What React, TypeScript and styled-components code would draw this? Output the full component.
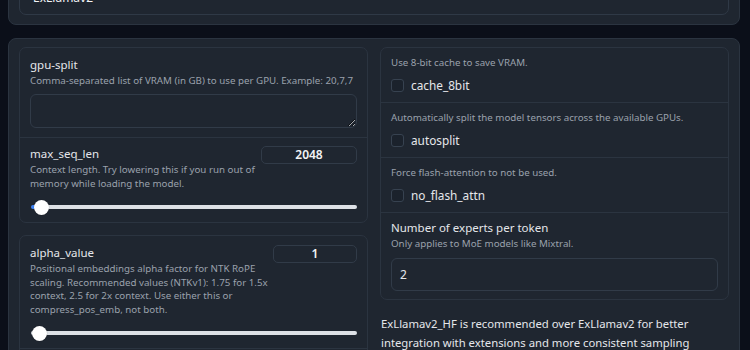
import React from 'react';
import styled, { createGlobalStyle } from 'styled-components';

const GlobalStyle = createGlobalStyle`
  html, body {
    margin: 0;
    padding: 0;
    background: #0b0f19;
  }
  body {
    font-family: "Noto Sans", "Open Sans", sans-serif;
    color: #e5e7eb;
    overflow: hidden;
    color-scheme: dark;
  }
`;

const Page = styled.div`
  width: 750px;
  height: 350px;
  overflow: hidden;
  padding: 0 10px 0 8px;
  box-sizing: border-box;
`;

const Stack = styled.div`
  margin-top: -31px;
  display: flex;
  flex-direction: column;
  gap: 13px;
`;

const Panel = styled.div`
  background: #1f2630;
  border: 1px solid #2b3440;
  border-radius: 8px;
  padding: 9px 10px;
`;

const MainPanel = styled(Panel)`
  padding: 8px 10px;
  display: grid;
  grid-template-columns: 1fr 1fr;
  gap: 12px;
  align-items: start;
`;

const Dropdown = styled.div`
  height: 36px;
  box-sizing: border-box;
  border: 1px solid #2f3946;
  border-radius: 7px;
  background: #1f2630;
  display: flex;
  align-items: center;
  justify-content: space-between;
  padding: 0 21px 0 13px;
  font-size: 12px;
  color: #f3f4f6;
`;

const Caret = styled.span`
  width: 0;
  height: 0;
  border-left: 4px solid transparent;
  border-right: 4px solid transparent;
  border-top: 5px solid #f3f4f6;
`;

const Column = styled.div`
  display: flex;
  flex-direction: column;
  gap: 12px;
`;

const Box = styled.div`
  border: 1px solid #2b3440;
  border-radius: 7px;
  background: #1f2630;
`;

const Section = styled.div<{ $pad?: string }>`
  padding: ${p => p.$pad || '8px 10px'};
  min-height: 18px;
  & + & {
    border-top: 1px solid #2b3440;
  }
`;

const Label = styled.div`
  font-size: 11.5px;
  line-height: 18px;
  color: #e5e7eb;
`;

const Info = styled.div<{ $lh?: number }>`
  font-size: 9.75px;
  line-height: ${p => p.$lh || 14}px;
  color: #9aa1ac;
`;

const TextArea = styled.textarea`
  display: block;
  width: 100%;
  height: 34px;
  margin-top: 6px;
  box-sizing: border-box;
  background: #1f2630;
  border: 1px solid #313b48;
  border-radius: 6px;
  resize: vertical;
  color: #e5e7eb;
  outline: none;
`;

const Row = styled.div<{ $gap?: number }>`
  display: flex;
  align-items: flex-start;
  gap: ${p => p.$gap ?? 6}px;
`;

const Grow = styled.div`
  flex: 1;
`;

const NumberBox = styled.div<{ $w: number }>`
  width: ${p => p.$w}px;
  height: 18px;
  margin-top: 1px;
  box-sizing: border-box;
  border: 1px solid #313b48;
  border-radius: 5px;
  font-size: 12px;
  font-weight: 600;
  line-height: 16px;
  text-align: center;
  color: #f3f4f6;
`;

const SliderTrack = styled.div`
  position: relative;
  margin: 10px 0 0 1px;
  height: 14px;
  display: flex;
  align-items: center;
`;

const Rail = styled.div<{ $fill: number }>`
  height: 4px;
  width: 100%;
  border-radius: 2px;
  background: linear-gradient(to right, #3b82f6 ${p => p.$fill}px, #dde1e6 ${p => p.$fill}px);
`;

const Thumb = styled.div`
  position: absolute;
  top: -0.5px;
  width: 15px;
  height: 15px;
  border-radius: 50%;
  background: #ffffff;
  box-shadow: 0 0 1px rgba(0, 0, 0, 0.4);
`;

const CheckRow = styled.div`
  display: flex;
  align-items: center;
  gap: 7px;
  height: 18px;
  margin-top: 6px;
`;

const CheckBox = styled.span`
  width: 13px;
  height: 13px;
  box-sizing: border-box;
  border: 1px solid #374250;
  border-radius: 3px;
  background: #1b222c;
`;

const CheckLabel = styled.span`
  font-size: 11.8px;
  color: #e5e7eb;
`;

const TextInput = styled.div`
  height: 33px;
  margin-top: 7px;
  box-sizing: border-box;
  border: 1px solid #313b48;
  border-radius: 6px;
  padding: 0 8px;
  display: flex;
  align-items: center;
  font-size: 12px;
  color: #e5e7eb;
`;

const Markdown = styled.p`
  margin: 2px 0 0 1px;
  font-size: 11.3px;
  line-height: 19px;
  color: #e5e7eb;
`;

const Slider = ({ pos, fill }: { pos: number; fill: number }) => (
  <SliderTrack>
    <Rail $fill={fill} />
    <Thumb style={{ left: pos }} />
  </SliderTrack>
);

const Check = ({ info, label }: { info: string; label: string }) => (
  <Section>
    <Info>{info}</Info>
    <CheckRow>
      <CheckBox />
      <CheckLabel>{label}</CheckLabel>
    </CheckRow>
  </Section>
);

const App = () => {
  return (
    <>
      <GlobalStyle />
      <Page>
        <Stack>
          <Panel>
            <Dropdown>
              <span>ExLlamav2</span>
              <Caret />
            </Dropdown>
          </Panel>
          <MainPanel>
            <Column>
              <Box>
                <Section $pad="8px 10px 9px">
                  <Label>gpu-split</Label>
                  <Info>Comma-separated list of VRAM (in GB) to use per GPU. Example: 20,7,7</Info>
                  <TextArea />
                </Section>
                <Section $pad="7px 10px 8px">
                  <Row>
                    <Grow>
                      <Label>max_seq_len</Label>
                      <Info $lh={13.5}>Context length. Try lowering this if you run out of memory while loading the model.</Info>
                    </Grow>
                    <NumberBox $w={96}>2048</NumberBox>
                  </Row>
                  <Slider pos={3} fill={6} />
                </Section>
              </Box>
              <Box>
                <Section $pad="8px 10px 8px">
                  <Row $gap={2}>
                    <Grow>
                      <Label>alpha_value</Label>
                      <Info $lh={13.5}>
                        Positional embeddings alpha factor for NTK RoPE scaling. Recommended values (NTKv1): 1.75 for 1.5x context, 2.5 for 2x context. Use either this or compress_pos_emb, not both.
                      </Info>
                    </Grow>
                    <NumberBox $w={84}>1</NumberBox>
                  </Row>
                  <Slider pos={1} fill={0} />
                </Section>
                <Section />
              </Box>
            </Column>
            <Column>
              <Box>
                <Check info="Use 8-bit cache to save VRAM." label="cache_8bit" />
                <Check info="Automatically split the model tensors across the available GPUs." label="autosplit" />
                <Check info="Force flash-attention to not be used." label="no_flash_attn" />
                <Section $pad="6px 10px 8px">
                  <Label>Number of experts per token</Label>
                  <Info>Only applies to MoE models like Mixtral.</Info>
                  <TextInput>2</TextInput>
                </Section>
              </Box>
              <Markdown>
                ExLlamav2_HF is recommended over ExLlamav2 for better integration with extensions and more consistent sampling behavior across loaders.
              </Markdown>
            </Column>
          </MainPanel>
        </Stack>
      </Page>
    </>
  );
};

export default App;
